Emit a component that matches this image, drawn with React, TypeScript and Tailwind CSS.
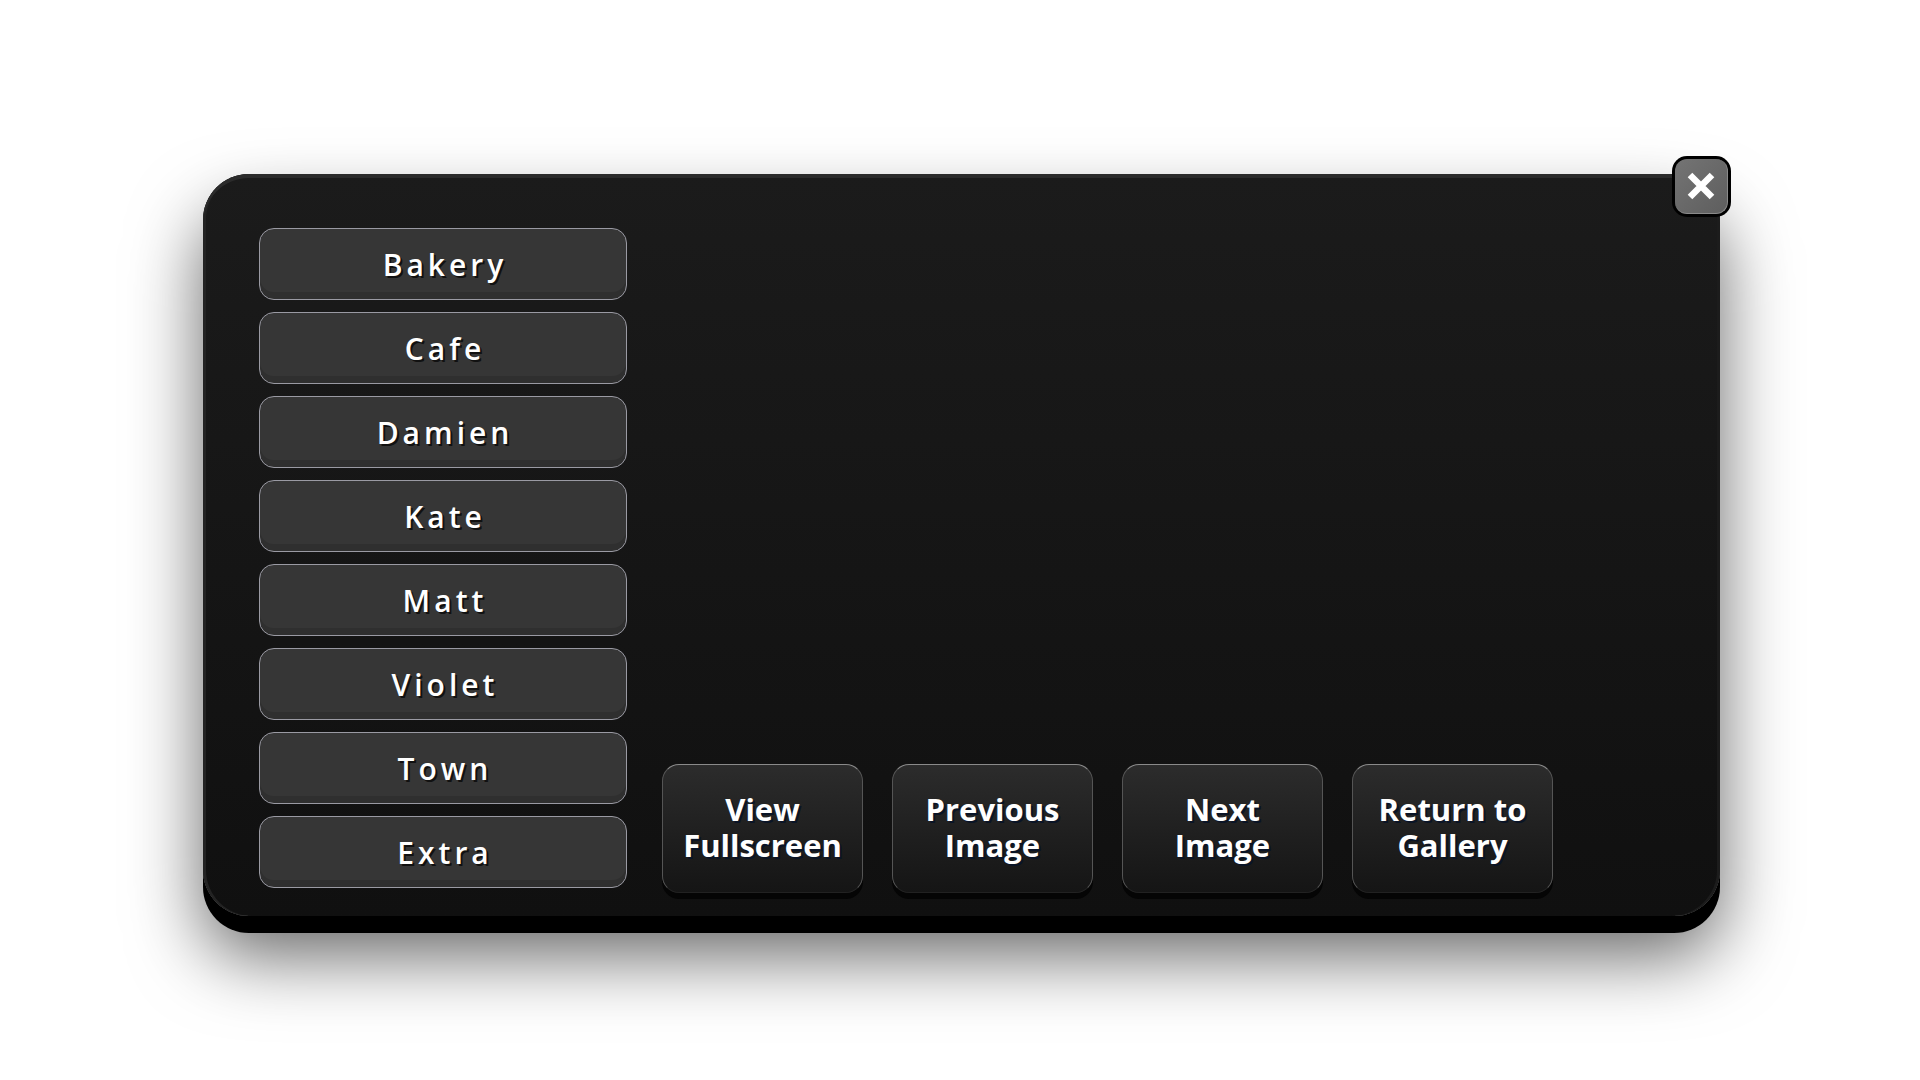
import React from "react";

const scenes = ["Bakery", "Cafe", "Damien", "Kate", "Matt", "Violet", "Town", "Extra"];
const actions = [
  ["View", "Fullscreen"],
  ["Previous", "Image"],
  ["Next", "Image"],
  ["Return to", "Gallery"],
];

export default function App() {
  return (
    <div
      className="w-full h-screen bg-white overflow-hidden pt-[174px] pl-[203px]"
      style={{ fontFamily: '"Open Sans", "Noto Sans", sans-serif' }}
    >
      <div className="relative w-[1517px] h-[742px] rounded-[46px] bg-gradient-to-b from-[#1b1b1b] to-[#101010] shadow-[inset_0_4px_0_#2b2b2b,inset_3px_0_0_#232323,inset_-3px_0_0_#1c1c1c,0_17px_0_#000,0_40px_72px_rgba(0,0,0,0.6)] flex items-end pl-[56px] pb-[28px] pt-[54px]">
        <div className="flex flex-col gap-[12px] w-[368px]">
          {scenes.map((s) => (
            <div
              key={s}
              className="h-[72px] rounded-[15px] border border-[#9a9aa3] bg-[#363636] shadow-[inset_0_-7px_0_rgba(0,0,0,0.12)] flex items-center justify-center"
            >
              <span className="text-white text-[30px] font-semibold tracking-[4px] leading-none pl-[4px] pt-[1px] [text-shadow:2px_2px_0_#111]">
                {s}
              </span>
            </div>
          ))}
        </div>
        <div className="flex gap-[29px] ml-[35px] mb-[-5px]">
          {actions.map((a) => (
            <div
              key={a.join(" ")}
              className="w-[201px] h-[129px] rounded-[17px] border border-t-[#8a8a8a] border-x-[#555] border-b-[#222] bg-gradient-to-b from-[#2c2c2c] to-[#151515] shadow-[0_6px_0_#050505] flex items-center justify-center pb-[4px]"
            >
              <p className="text-white text-center text-[31px] font-bold leading-[36px] [text-shadow:2px_2px_0_#0a1426]">
                {a[0]}
                <br />
                {a[1]}
              </p>
            </div>
          ))}
        </div>
        <div className="absolute right-[-11px] top-[-18px] w-[59px] h-[61px] rounded-[15px] bg-black p-[3px]">
          <div className="w-full h-full rounded-[12px] bg-gradient-to-br from-[#747474] to-[#5e5e5e] border-b border-r border-[#8a8a8a] flex items-center justify-center">
            <svg width="30" height="28" viewBox="0 0 30 28">
              <path d="M4 3 L26 25 M26 3 L4 25" stroke="#fff" strokeWidth="6.5" strokeLinecap="butt" />
            </svg>
          </div>
        </div>
      </div>
    </div>
  );
}
